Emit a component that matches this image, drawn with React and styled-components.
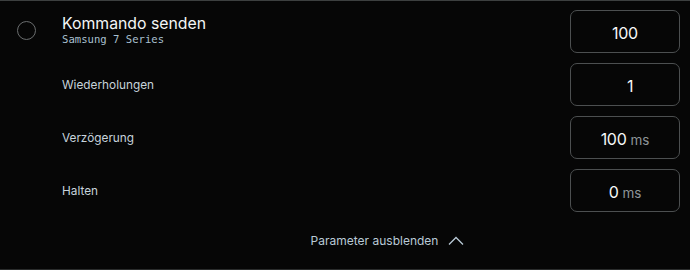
import React from "react";
import styled, { createGlobalStyle } from "styled-components";

const Global = createGlobalStyle`
  html, body {
    margin: 0;
    padding: 0;
    background: #060606;
  }
  body {
    font-family: "Open Sans", "Noto Sans", sans-serif;
  }
`;

const Panel = styled.div`
  width: 690px;
  height: 270px;
  box-sizing: border-box;
  background: #060606;
  border-top: 1px solid #3c3f3f;
  border-bottom: 1px solid #2a2c2c;
  padding: 9px 10px 0 0;
  display: flex;
  flex-direction: column;
`;

const Row = styled.div`
  display: flex;
  align-items: center;
  height: 43px;
  margin-bottom: 10px;
`;

const Lead = styled.div`
  width: 62px;
  display: flex;
  justify-content: flex-start;
  padding-left: 17px;
  box-sizing: border-box;
`;

const Radio = styled.div`
  width: 19px;
  height: 19px;
  border-radius: 50%;
  border: 1.3px solid #6a6d6e;
  box-sizing: border-box;
  margin-top: -2px;
`;

const Info = styled.div`
  flex: 1;
  display: flex;
  flex-direction: column;
`;

const Title = styled.div`
  font-family: "Inter", sans-serif;
  font-size: 15.8px;
  color: #f4f6f7;
  line-height: 19px;
  margin-top: -3px;
`;

const Sub = styled.div`
  font-family: "DejaVu Sans Mono", "Liberation Mono", monospace;
  font-size: 10.6px;
  color: #a9c0d0;
  line-height: 13px;
`;

const Label = styled.div`
  flex: 1;
  font-family: "Inter", sans-serif;
  font-size: 11.8px;
  color: #c6d3dc;
`;

const ValueBox = styled.div`
  width: 110px;
  height: 43px;
  box-sizing: border-box;
  border: 1px solid #4c4f50;
  border-radius: 7px;
  display: flex;
  align-items: baseline;
  justify-content: center;
  padding-top: 12px;
  padding-left: ${(p) => p.$shift || 0}px;
  gap: 4px;
  font-family: "Inter", sans-serif;
`;

const Num = styled.span`
  font-size: 16px;
  color: #f5f7f8;
  letter-spacing: -0.3px;
`;

const Unit = styled.span`
  font-size: 13.5px;
  color: #8e9599;
`;

const Footer = styled.div`
  display: flex;
  justify-content: center;
  align-items: center;
  gap: 10px;
  margin-top: 11px;
  padding-left: 95px;
  font-family: "Inter", sans-serif;
  font-size: 12px;
  color: #b9cad6;
`;

const params = [
  { label: "Wiederholungen", value: "1", shift: 10 },
  { label: "Verzögerung", value: "100", unit: "ms" },
  { label: "Halten", value: "0", unit: "ms" },
];

export default function App() {
  return (
    <>
      <Global />
      <Panel>
        <Row>
          <Lead>
            <Radio />
          </Lead>
          <Info>
            <Title>Kommando senden</Title>
            <Sub>Samsung 7 Series</Sub>
          </Info>
          <ValueBox>
            <Num>100</Num>
          </ValueBox>
        </Row>
        {params.map((p) => (
          <Row key={p.label}>
            <Lead />
            <Label>{p.label}</Label>
            <ValueBox $shift={p.shift}>
              <Num>{p.value}</Num>
              {p.unit && <Unit>{p.unit}</Unit>}
            </ValueBox>
          </Row>
        ))}
        <Footer>
          <span>Parameter ausblenden</span>
          <svg width="16" height="10" viewBox="0 0 16 10" fill="none">
            <path d="M1 8.5 L8 1.5 L15 8.5" stroke="#b9cad6" strokeWidth="1.3" />
          </svg>
        </Footer>
      </Panel>
    </>
  );
}
